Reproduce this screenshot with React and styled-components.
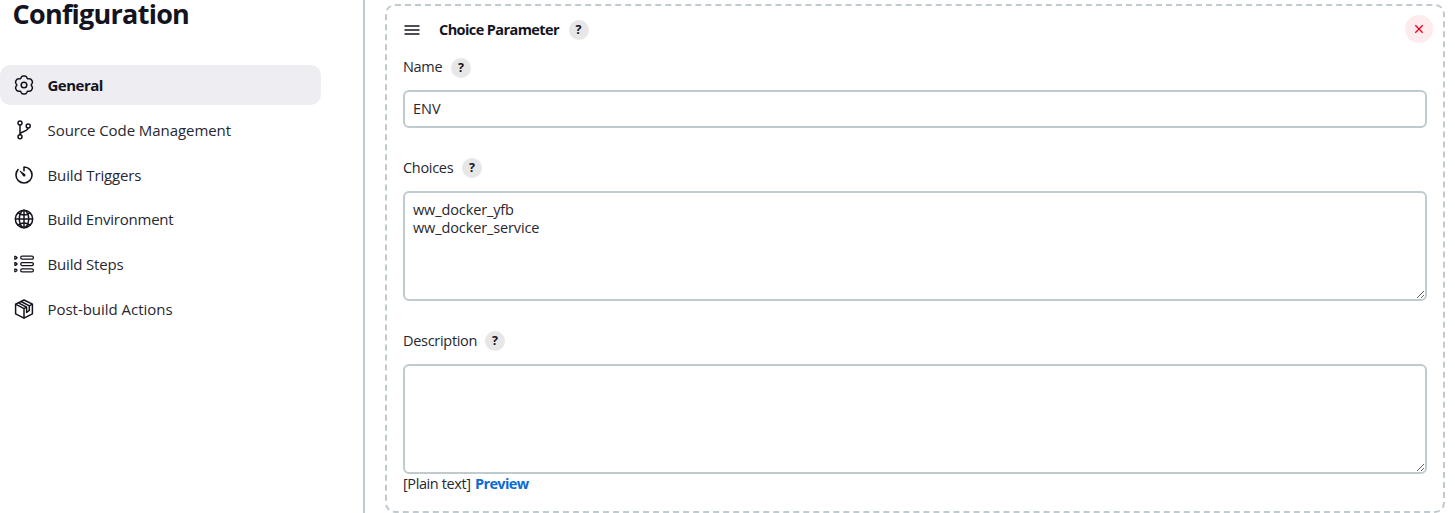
import React from "react";
import styled, { createGlobalStyle } from "styled-components";
import { IoTimerOutline, IoGlobeOutline } from "react-icons/io5";

const GlobalStyle = createGlobalStyle`
  *, *::before, *::after { box-sizing: border-box; }
  body {
    margin: 0;
    background: #fff;
    color: #14141f;
    font-family: "Open Sans", "Noto Sans", sans-serif;
    font-size: 15px;
    overflow: hidden;
  }
`;

const Page = styled.div`
  display: flex;
  height: 513px;
  overflow: hidden;
`;

const Sidebar = styled.aside`
  width: 365px;
  flex: none;
  border-right: 2px solid #bfcbcf;
`;

const Title = styled.h1`
  margin: 0;
  height: 65px;
  padding-left: 12.5px;
  font-size: 27px;
  line-height: 27px;
  font-weight: 700;
  letter-spacing: ${(p) => p.$spacing}px;
`;

const Nav = styled.nav`
  display: flex;
  flex-direction: column;
  gap: 4.8px;
  width: 321px;
`;

const NavItem = styled.a`
  display: flex;
  align-items: center;
  gap: 13.5px;
  height: 40px;
  padding-left: 14px;
  border-radius: 10px;
  background: ${(p) => (p.$active ? "#eeedf2" : "transparent")};
  letter-spacing: ${(p) => p.$spacing}px;
  white-space: nowrap;

  span {
    color: ${(p) => (p.$active ? "#14141f" : "#272731")};
    font-weight: ${(p) => (p.$active ? 700 : 400)};
  }

  svg {
    width: 20px;
    height: 20px;
    flex: none;
  }
`;

const TimerIcon = styled(IoTimerOutline)`
  path:first-of-type { stroke-width: 38px; }
  transform: scale(1.07);
`;

const GlobeIcon = styled(IoGlobeOutline)`
  path { stroke-width: 36px; }
  transform: scale(1.07);
`;

const Main = styled.main`
  flex: 1;
  padding: 4px 10px 0 20px;
`;

const Card = styled.section`
  height: 509px;
  padding: 8px 16px 0;
  border: 2px dashed #bfcbcf;
  border-radius: 10px;
`;

const CardHeader = styled.header`
  display: flex;
  align-items: center;
  height: 30px;
  margin-right: -6px;

  > svg { margin: 2px 18px 0 0; }
`;

const CardTitle = styled.span`
  width: 120.5px;
  font-size: 14.5px;
  font-weight: 700;
  white-space: nowrap;
  letter-spacing: ${(p) => p.$spacing}px;
`;

const Help = styled.button`
  width: 20px;
  height: 20px;
  margin: ${(p) => p.$top ?? 0}px 0 0 9px;
  padding: 0;
  border: 0;
  border-radius: 50%;
  background: #e7e7e7;
  color: #14141f;
  font: 700 12.5px/20px "Open Sans", sans-serif;
  text-align: center;
`;

const DeleteButton = styled.button`
  display: grid;
  place-items: center;
  width: 28px;
  height: 28px;
  margin-left: auto;
  padding: 0;
  border: 0;
  border-radius: 50%;
  background: #fdebed;
`;

const Field = styled.div`
  display: flex;
  flex-direction: column;
  margin-bottom: 30px;
`;

const LabelRow = styled.div`
  display: flex;
  align-items: center;
  height: 20px;
  margin: ${(p) => p.$top ?? 0}px 0 ${(p) => p.$bottom ?? 13}px;
`;

const Label = styled.label`
  width: ${(p) => p.$width}px;
  padding-bottom: ${(p) => p.$lift ?? 1}px;
  color: #272731;
  font-size: 14.5px;
  letter-spacing: ${(p) => p.$spacing}px;
  white-space: nowrap;
`;

const Input = styled.input`
  width: 100%;
  height: 38px;
  padding: 0 8px 2px;
  border: 2px solid #bfcbcf;
  border-radius: 6px;
  background: #fff;
  color: #272731;
  font: 14.5px "Open Sans", sans-serif;
  letter-spacing: 0;
`;

const TextArea = styled.textarea`
  display: block;
  width: 100%;
  height: 110px;
  padding: 8px;
  border: 2px solid #bfcbcf;
  border-radius: 6px;
  background: #fff;
  color: #272731;
  font: 14.5px/18px "Open Sans", sans-serif;
  letter-spacing: -0.12px;
  resize: vertical;
`;

const FormatRow = styled.div`
  display: flex;
  gap: 4.5px;
  height: 20px;
  color: #272731;
  font-size: 14.5px;
  line-height: 20px;
  letter-spacing: -0.4px;
`;

const PreviewLink = styled.a`
  color: #0b6bd4;
  font-weight: 700;
  letter-spacing: -0.65px;
`;

/* Six rounded lobes, sampled around the centre of a 20px box. */
const gearOutline =
  Array.from({ length: 72 }, (_, i) => {
    const a = (i / 72) * Math.PI * 2;
    const r = 8.4 + 0.9 * Math.cos(6 * (a - Math.PI / 2)) - 0.25 * Math.cos(12 * (a - Math.PI / 2));
    return `${i ? "L" : "M"}${(10 + r * Math.cos(a)).toFixed(2)} ${(10 + r * Math.sin(a)).toFixed(2)}`;
  }).join("") + "z";

const GearIcon = () => (
  <svg viewBox="0 0 20 20" fill="none" stroke="currentColor" strokeWidth="1.5" strokeLinejoin="round">
    <path d={gearOutline} />
    <circle cx="10" cy="10" r="2.8" />
  </svg>
);

const BranchIcon = () => (
  <svg viewBox="0 0 20 20" fill="none" stroke="currentColor" strokeWidth="1.5" strokeLinecap="round">
    <circle cx="6" cy="2.9" r="2" />
    <circle cx="6" cy="16.8" r="2" />
    <circle cx="14.2" cy="5.9" r="2" />
    <path d="M6 5v9.8M14 8c-.4 4-6.6 2.8-8 6" />
  </svg>
);

const StepsIcon = () => (
  <svg viewBox="0 0 20 20" fill="none" stroke="currentColor" strokeWidth="1.25" strokeLinejoin="round">
    {[3.7, 10, 16.3].map((y) => (
      <g key={y}>
        <path d={`M.8 ${y - 1.3}L1.8 ${y - 1.3}L3.1 ${y}L1.8 ${y + 1.3}L.8 ${y + 1.3}z`} />
        <rect x="6.7" y={y - 1.5} width="12.7" height="3" rx="1.4" />
      </g>
    ))}
  </svg>
);

const PackageIcon = () => (
  <svg viewBox="0 0 20 20" fill="none" stroke="currentColor" strokeWidth="1.5" strokeLinejoin="round">
    <path d="M10 1l8.4 4.2v9.6L10 19.2l-8.4-4.4V5.2z" />
    <path d="M1.6 5.2L10 9.6M15.2 6.9l3.2-1.7M10 9.6l2.6-1.4M10 9.6v9.6" />
    <path d="M4.4 3.9l8.2 4.3v5.3l2.7-2.1V6.9L7.1 2.5" />
  </svg>
);

const DragIcon = () => (
  <svg width="18" height="14" viewBox="0 0 18 14" fill="none" stroke="#14141f" strokeWidth="1.4">
    <path d="M1.5 3h15M1.5 7h15M1.5 11h15" />
  </svg>
);

const CrossIcon = () => (
  <svg width="10" height="10" viewBox="0 0 10 10" fill="none" stroke="#e6001f" strokeWidth="1.3">
    <path d="M1.3 1.3l7.4 7.4M8.7 1.3L1.3 8.7" />
  </svg>
);

const sections = [
  { label: "General", icon: GearIcon, active: true, spacing: -0.5 },
  { label: "Source Code Management", icon: BranchIcon, spacing: -0.06 },
  { label: "Build Triggers", icon: TimerIcon, spacing: -0.13 },
  { label: "Build Environment", icon: GlobeIcon, spacing: -0.21 },
  { label: "Build Steps", icon: StepsIcon, spacing: -0.17 },
  { label: "Post-build Actions", icon: PackageIcon, spacing: -0.03 },
];

export default function App() {
  return (
    <>
      <GlobalStyle />
      <Page>
        <Sidebar>
          <Title $spacing={-0.75}>Configuration</Title>
          <Nav>
            {sections.map(({ label, icon: Icon, active, spacing }) => (
              <NavItem key={label} $active={active} $spacing={spacing}>
                <Icon />
                <span>{label}</span>
              </NavItem>
            ))}
          </Nav>
        </Sidebar>
        <Main>
          <Card>
            <CardHeader>
              <DragIcon />
              <CardTitle $spacing={-0.59}>Choice Parameter</CardTitle>
              <Help $top={2}>?</Help>
              <DeleteButton aria-label="Delete"><CrossIcon /></DeleteButton>
            </CardHeader>
            <Field>
              <LabelRow $top={14} $bottom={12}>
                <Label $width={39} $spacing={-0.3} $lift={3}>Name</Label>
                <Help>?</Help>
              </LabelRow>
              <Input defaultValue="ENV" />
            </Field>
            <Field>
              <LabelRow>
                <Label $width={50} $spacing={-0.3}>Choices</Label>
                <Help>?</Help>
              </LabelRow>
              <TextArea spellCheck={false} defaultValue={"ww_docker_yfb\nww_docker_service"} />
            </Field>
            <Field>
              <LabelRow>
                <Label $width={73} $spacing={-0.3}>Description</Label>
                <Help>?</Help>
              </LabelRow>
              <TextArea />
              <FormatRow>
                <span>[Plain text]</span>
                <PreviewLink>Preview</PreviewLink>
              </FormatRow>
            </Field>
          </Card>
        </Main>
      </Page>
    </>
  );
}
